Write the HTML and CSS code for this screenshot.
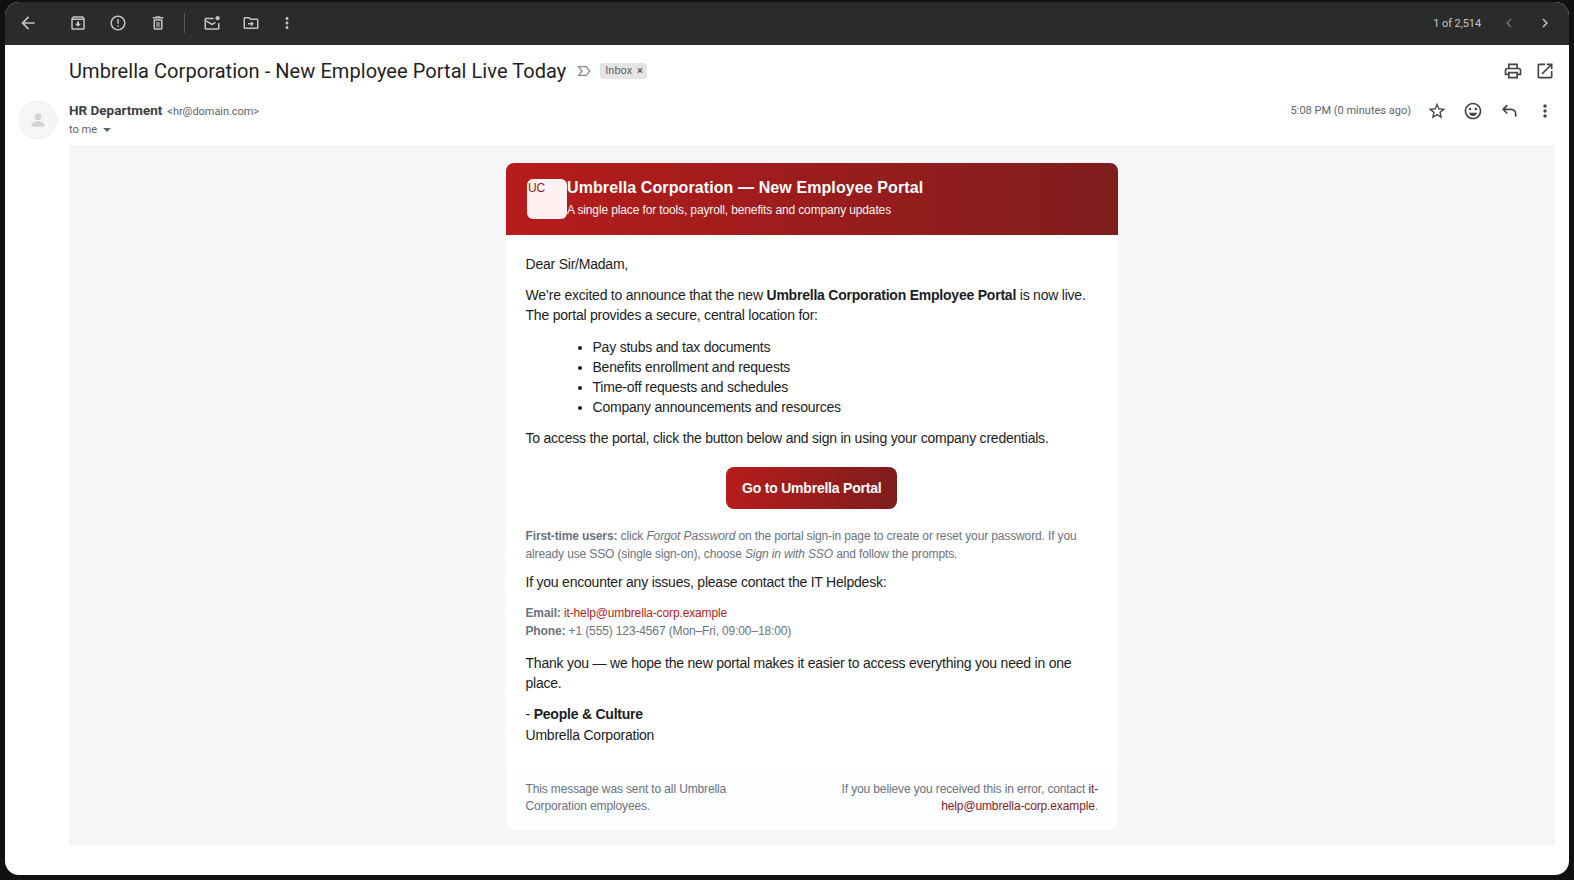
FILE: index.html
```html
<!DOCTYPE html>
<html lang="en">
<head>
  <meta charset="UTF-8">
  <title>Umbrella Corporation - New Employee Portal Live Today</title>
  <link rel="stylesheet" href="styles.css">
</head>
<body>
  <div class="window">

    <div class="toolbar">
      <span class="tool tool-back"><svg viewBox="0 0 24 24"><path d="M20 11H7.83l5.59-5.59L12 4l-8 8 8 8 1.41-1.41L7.83 13H20v-2z"/></svg></span>
      <span class="tool tool-archive"><svg viewBox="0 0 24 24"><path d="M20.54 5.23l-1.39-1.68C18.88 3.21 18.47 3 18 3H6c-.47 0-.88.21-1.16.55L3.46 5.23C3.17 5.57 3 6.02 3 6.5V19c0 1.1.9 2 2 2h14c1.1 0 2-.9 2-2V6.5c0-.48-.17-.93-.46-1.27zM6.24 5h11.52l.81.97H5.44l.8-.97zM5 19V8h14v11H5zm8.45-9h-2.9v3H8l4 4 4-4h-2.55z"/></svg></span>
      <span class="tool"><svg viewBox="0 0 24 24"><path d="M11 15h2v2h-2zm0-8h2v6h-2zm.99-5C6.47 2 2 6.48 2 12s4.47 10 9.99 10C17.52 22 22 17.52 22 12S17.52 2 11.99 2zM12 20c-4.42 0-8-3.58-8-8s3.58-8 8-8 8 3.58 8 8-3.58 8-8 8z"/></svg></span>
      <span class="tool"><svg viewBox="0 0 24 24"><path d="M6 19c0 1.1.9 2 2 2h8c1.1 0 2-.9 2-2V7H6v12zM8 9h8v10H8V9zm7.5-5l-1-1h-5l-1 1H5v2h14V4z"/><path d="M10 10.500h1.500v7H10zM12.500 10.500H14v7h-1.500z"/></svg></span>
      <span class="tool-sep"></span>
      <span class="tool tool-mail"><svg viewBox="0 0 24 24"><path d="M20 12v7H4V7h10V5H4c-1.1 0-2 .9-2 2v12c0 1.1.9 2 2 2h16c1.1 0 2-.9 2-2v-7h-2z"/><path d="M4.500 8.200l7.500 4.600 4.200-2.600 1 1.700-5.200 3.200-8.500-5.200z"/><circle cx="19.500" cy="5.500" r="2.800"/></svg></span>
      <span class="tool tool-folder"><svg viewBox="0 0 24 24"><path d="M20 6h-8l-2-2H4c-1.1 0-2 .9-2 2v12c0 1.1.9 2 2 2h16c1.1 0 2-.9 2-2V8c0-1.1-.9-2-2-2zm0 12H4V6h5.170l2 2H20v10z"/><path d="M12 9.500l4 3.500-4 3.500V14H8v-2h4z"/></svg></span>
      <span class="tool tool-more"><svg viewBox="0 0 24 24"><path d="M12 8c1.100 0 2-.9 2-2s-.9-2-2-2-2 .9-2 2 .9 2 2 2zm0 2c-1.100 0-2 .9-2 2s.9 2 2 2 2-.9 2-2-.9-2-2-2zm0 6c-1.100 0-2 .9-2 2s.9 2 2 2 2-.9 2-2-.9-2-2-2z"/></svg></span>
      <span class="pager">1 of 2,514</span>
      <span class="tool tool-prev"><svg viewBox="0 0 24 24"><path d="M15.410 7.410L14 6l-6 6 6 6 1.410-1.410L10.830 12z"/></svg></span>
      <span class="tool tool-next"><svg viewBox="0 0 24 24"><path d="M10 6L8.590 7.410 13.170 12l-4.580 4.590L10 18l6-6z"/></svg></span>
    </div>

    <div class="subject-row">
      <h1 class="subject">Umbrella Corporation - New Employee Portal Live Today</h1>
      <svg class="importance" viewBox="0 0 24 24"><path d="M4 5.500h11.500l5 6.500-5 6.500H4l5-6.500z"/></svg>
      <span class="label">Inbox <span class="label-x">×</span></span>
      <span class="subject-actions">
        <svg viewBox="0 0 24 24"><path d="M19 8h-1V3H6v5H5c-1.660 0-3 1.340-3 3v6h4v4h12v-4h4v-6c0-1.660-1.340-3-3-3zM8 5h8v3H8V5zm8 12v2H8v-4h8v2zm2-2v-2H6v2H4v-4c0-.55.45-1 1-1h14c.55 0 1 .45 1 1v4h-2z"/></svg>
        <svg viewBox="0 0 24 24"><path d="M19 19H5V5h7V3H5c-1.110 0-2 .9-2 2v14c0 1.100.89 2 2 2h14c1.100 0 2-.9 2-2v-7h-2v7zM14 3v2h3.590l-9.830 9.830 1.410 1.410L19 6.410V10h2V3h-7z"/></svg>
      </span>
    </div>

    <div class="sender-row">
      <div class="avatar">
        <svg viewBox="0 0 24 24"><circle cx="12" cy="8" r="4"/><path d="M4 20v-2c0-3 5-4.500 8-4.500s8 1.500 8 4.500v2z"/></svg>
      </div>
      <div class="sender">
        <div class="sender-line"><b class="sender-name">HR Department</b> <span class="sender-mail">&lt;hr@domain.com&gt;</span></div>
        <div class="to-line">to me <span class="caret"></span></div>
      </div>
      <span class="date">5:08 PM (0 minutes ago)</span>
      <span class="msg-actions">
        <svg viewBox="0 0 24 24"><path d="M22 9.240l-7.190-.62L12 2 9.190 8.630 2 9.240l5.460 4.730L5.820 21 12 17.270 18.180 21l-1.630-7.030L22 9.240zM12 15.400l-3.760 2.270 1-4.280-3.320-2.880 4.380-.38L12 6.100l1.710 4.040 4.380.38-3.320 2.880 1 4.280L12 15.400z"/></svg>
        <svg viewBox="0 0 24 24"><path d="M11.990 2C6.470 2 2 6.480 2 12s4.470 10 9.990 10C17.520 22 22 17.520 22 12S17.520 2 11.990 2zM12 20c-4.420 0-8-3.580-8-8s3.580-8 8-8 8 3.580 8 8-3.580 8-8 8z"/><circle cx="8.500" cy="9.500" r="1.500"/><circle cx="15.500" cy="9.500" r="1.500"/><path d="M12 18c2.280 0 4.220-1.660 5-4H7c.78 2.340 2.720 4 5 4z"/></svg>
        <svg class="reply" viewBox="0 0 24 24"><path d="M20 19v-3.500a5.500 5.500 0 0 0-5.500-5.500H5M10 5l-5 5 5 5"/></svg>
        <svg viewBox="0 0 24 24"><path d="M12 8c1.100 0 2-.9 2-2s-.9-2-2-2-2 .9-2 2 .9 2 2 2zm0 2c-1.100 0-2 .9-2 2s.9 2 2 2 2-.9 2-2-.9-2-2-2zm0 6c-1.100 0-2 .9-2 2s.9 2 2 2 2-.9 2-2-.9-2-2-2z"/></svg>
      </span>
    </div>

    <div class="panel">
      <div class="card">
        <div class="card-head">
          <div class="logo">UC</div>
          <div class="head-text">
            <div class="card-title">Umbrella Corporation — New Employee Portal</div>
            <div class="card-sub">A single place for tools, payroll, benefits and company updates</div>
          </div>
        </div>

        <div class="card-body">
          <p>Dear Sir/Madam,</p>
          <p>We’re excited to announce that the new <strong>Umbrella Corporation Employee Portal</strong> is now live. The portal provides a secure, central location for:</p>
          <ul>
            <li>Pay stubs and tax documents</li>
            <li>Benefits enrollment and requests</li>
            <li>Time-off requests and schedules</li>
            <li>Company announcements and resources</li>
          </ul>
          <p>To access the portal, click the button below and sign in using your company credentials.</p>
          <div class="cta"><a class="btn" href="#">Go to Umbrella Portal</a></div>
          <p class="small"><strong>First-time users:</strong> click <em>Forgot Password</em> on the portal sign-in page to create or reset your password. If you already use SSO (single sign-on), choose <em>Sign in with SSO</em> and follow the prompts.</p>
          <p>If you encounter any issues, please contact the IT Helpdesk:</p>
          <p class="small contact"><strong>Email:</strong> <a href="#">it-help@umbrella-corp.example</a><br><strong>Phone:</strong> +1 (555) 123-4567 (Mon–Fri, 09:00–18:00)</p>
          <p>Thank you — we hope the new portal makes it easier to access everything you need in one place.</p>
          <p>- <strong>People &amp; Culture</strong><br>Umbrella Corporation</p>
        </div>

        <div class="card-foot">
          <div class="foot-left">This message was sent to all Umbrella Corporation employees.</div>
          <div class="foot-right">If you believe you received this in error, contact <a href="#">it-help@umbrella-corp.example</a>.</div>
        </div>
      </div>
    </div>

  </div>
</body>
</html>
```

FILE: styles.css
```css
html, body {
  margin: 0;
  padding: 0;
  height: 880px;
  overflow: hidden;
}

body {
  background: #111;
  font-family: Roboto, sans-serif;
}

.window {
  width: 1564px;
  height: 873px;
  margin: 2px 0 0 5px;
  background: #fff;
  border-radius: 14px;
  overflow: hidden;
}

/* top bar */
.toolbar {
  display: flex;
  align-items: center;
  height: 42px;
  padding-bottom: 1px;
  background: #2b2b2b;
  color: #c4c4c4;
}

.tool {
  display: flex;
  justify-content: center;
  width: 40px;
}

.tool svg {
  width: 18px;
  height: 18px;
  fill: #c4c4c4;
}

.tool-back { margin-left: 3px; }
.tool-back svg { width: 20px; height: 20px; }
.tool-archive { margin-left: 10px; }
.tool-mail { margin-left: 7px; }
.tool-folder { margin-left: -1px; }
.tool-more { margin-left: -4px; }
.tool-prev { margin-left: 8px; }
.tool-prev svg { fill: #6e6e6e; }
.tool-next { margin-left: -4px; margin-right: 4px; }

.tool-sep {
  width: 1px;
  height: 20px;
  margin-left: 6px;
  background: #555;
}

.pager {
  margin-left: auto;
  font-size: 11px;
  letter-spacing: -.1px;
}

/* subject */
.subject-row {
  display: flex;
  align-items: center;
  height: 52px;
  padding: 0 14px 0 64px;
}

.subject {
  margin: 0;
  font-size: 20px;
  font-weight: 400;
  letter-spacing: .06px;
  color: #1f1f1f;
}

.importance {
  width: 16px;
  height: 16px;
  margin-left: 10px;
  fill: none;
  stroke: #8a8a8a;
  stroke-width: 2;
}

.label {
  margin-left: 8px;
  padding: 1px 4px 2px 5px;
  border-radius: 3px;
  background: #e4e4e4;
  color: #5f6368;
  font-size: 11px;
}

.label-x {
  margin-left: 2px;
  color: #333;
}

.subject-actions {
  display: flex;
  gap: 12px;
  margin-left: auto;
}

.subject-actions svg {
  width: 20px;
  height: 20px;
  fill: #444;
}

/* sender */
.sender-row {
  display: flex;
  align-items: flex-start;
  height: 48px;
  padding-right: 14px;
}

.avatar {
  display: flex;
  align-items: center;
  justify-content: center;
  width: 36px;
  height: 36px;
  margin: 4px 12px 0 14px;
  border: 1px solid #eee;
  border-radius: 50%;
  background: #f6f6f6;
}

.avatar svg {
  width: 20px;
  height: 20px;
  fill: #d4d4d4;
}

.sender-line {
  margin-top: 4px;
  line-height: 18px;
}

.sender-name {
  font-size: 13.5px;
  font-weight: 700;
  color: #3c4043;
}

.sender-mail {
  margin-left: 1px;
  font-size: 11px;
  letter-spacing: -.05px;
  color: #5f6368;
}

.to-line {
  font-size: 11px;
  line-height: 17px;
  color: #5f6368;
}

.caret {
  display: inline-block;
  margin-left: 3px;
  border-top: 4px solid #5f6368;
  border-left: 4px solid transparent;
  border-right: 4px solid transparent;
  vertical-align: middle;
}

.date {
  margin-left: auto;
  margin-top: 7px;
  font-size: 11px;
  color: #5f6368;
}

.msg-actions {
  display: flex;
  gap: 16px;
  margin-left: 16px;
  margin-top: 4px;
}

.msg-actions svg {
  width: 20px;
  height: 20px;
  fill: #444;
}

.msg-actions .reply {
  fill: none;
  stroke: #444;
  stroke-width: 2;
}

/* mail content */
.panel {
  height: 683px;
  margin: 0 14px 0 64px;
  padding-top: 18px;
  background: #f4f6f8;
}

.card {
  width: 612px;
  margin: 0 auto;
  border-radius: 8px;
  background: #fff;
  overflow: hidden;
  font-family: "Liberation Sans", Arial, sans-serif;
  font-size: 14px;
  line-height: 20.2px;
  letter-spacing: -.22px;
  color: #1a1d23;
}

.card-head {
  display: flex;
  height: 40px;
  padding: 16px 21px;
  background: linear-gradient(90deg, #b71c1c, #7f1d1d);
  color: #fff;
}

.logo {
  width: 37px;
  height: 36px;
  padding: 2px 2px 2px 1px;
  flex-shrink: 0;
  border-radius: 6px;
  background: #fff1f1;
  color: #7f1d1d;
  font-size: 12px;
  line-height: 14px;
}

.head-text {
  margin-top: -1px;
}

.card-title {
  font-size: 16px;
  font-weight: 700;
  line-height: 20px;
  letter-spacing: .1px;
}

.card-sub {
  margin-top: 3px;
  font-size: 12px;
  line-height: 18px;
  letter-spacing: -.13px;
  opacity: .95;
}

.card-body {
  padding: 19px 20px 0 19.5px;
}

.card-body p {
  margin: 0 0 11px;
}

.card-body ul {
  margin: 0 0 11px;
  padding-left: 67px;
}

.cta {
  margin: 18px 0 18px;
  text-align: center;
}

.btn {
  display: inline-block;
  padding: 11px 16px;
  border-radius: 8px;
  background: linear-gradient(90deg, #b71c1c, #7f1d1d);
  color: #fff;
  font-weight: 700;
  text-decoration: none;
}

.card-body .small {
  margin-bottom: 9px;
  font-size: 12px;
  line-height: 18px;
  letter-spacing: -.13px;
  color: #6b7280;
}

.card-body .contact {
  margin-top: 12px;
  margin-bottom: 13px;
}

.contact a {
  color: #b71c1c;
  text-decoration: none;
}

.card-foot {
  display: flex;
  justify-content: space-between;
  margin-top: 24px;
  padding: 12px 20px 15px 19.5px;
  background: #fbfdff;
  font-size: 12px;
  line-height: 17px;
  letter-spacing: -.13px;
  color: #6b7280;
}

.foot-left { width: 230px; }

.foot-right {
  width: 262px;
  text-align: right;
}

.foot-right a {
  color: #7f1d1d;
  text-decoration: none;
}
```
